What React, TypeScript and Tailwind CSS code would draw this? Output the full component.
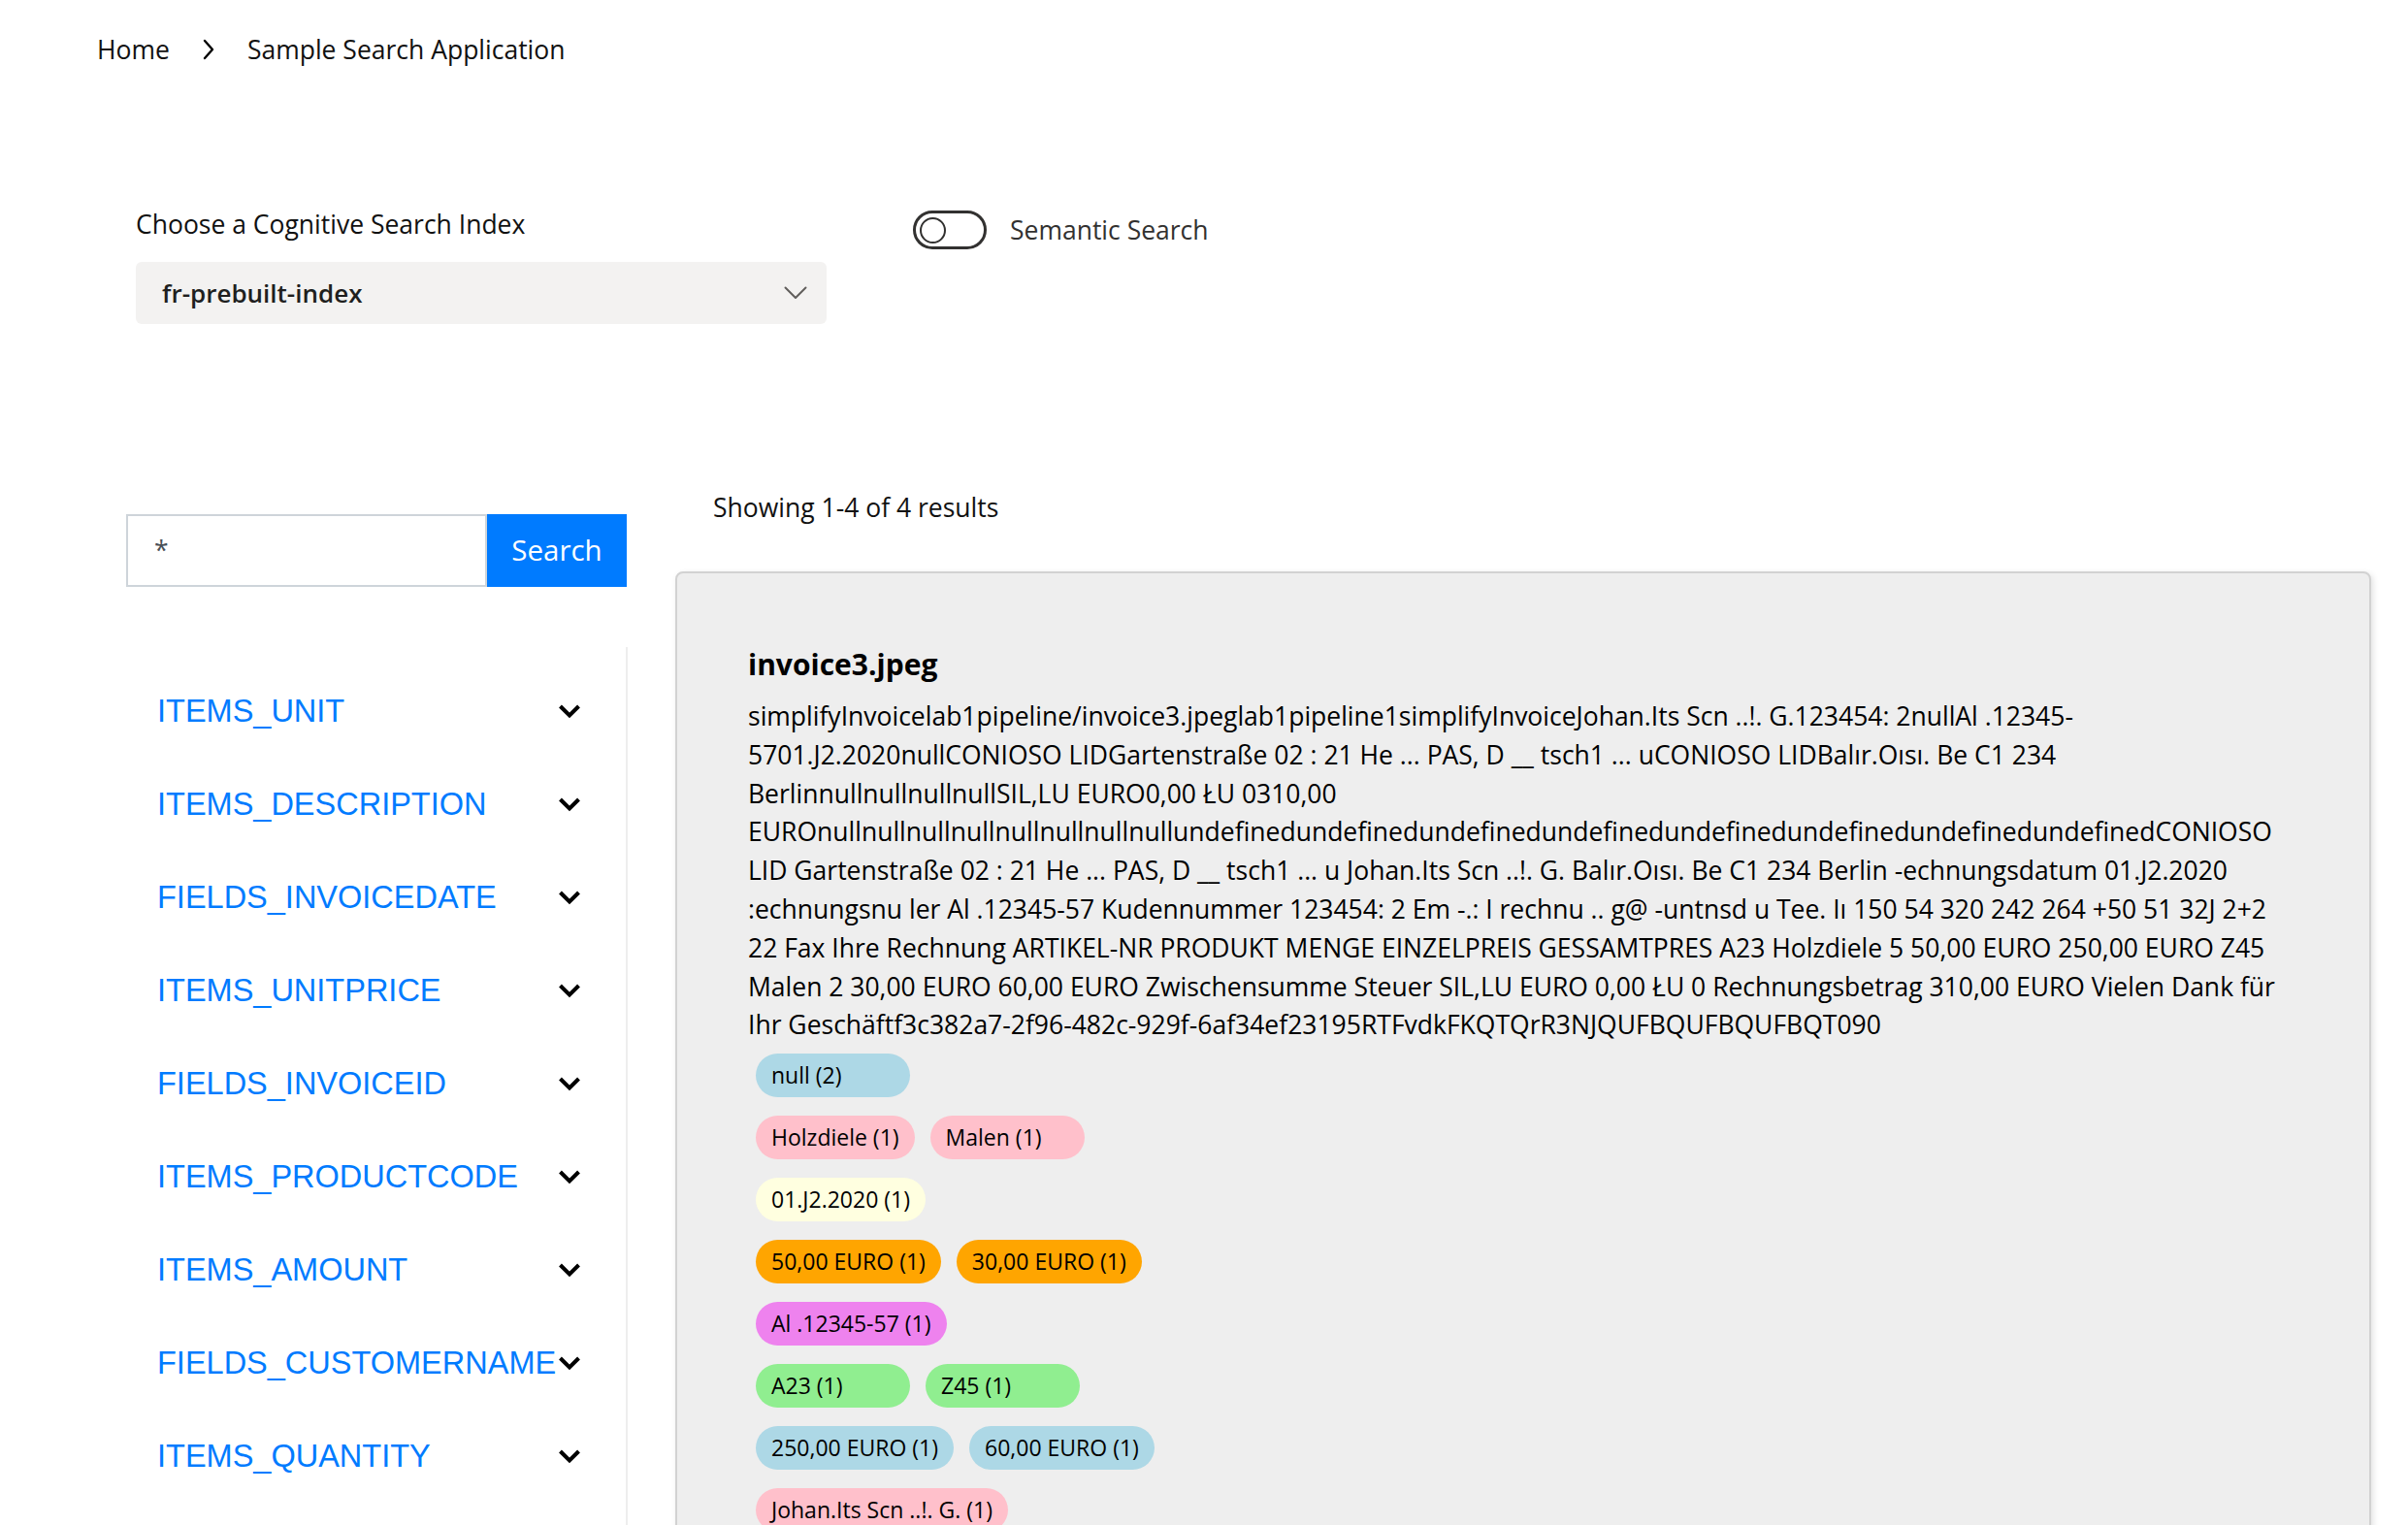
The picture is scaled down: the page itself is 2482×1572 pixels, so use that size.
import React from 'react';

const facets = [
  'ITEMS_UNIT',
  'ITEMS_DESCRIPTION',
  'FIELDS_INVOICEDATE',
  'ITEMS_UNITPRICE',
  'FIELDS_INVOICEID',
  'ITEMS_PRODUCTCODE',
  'ITEMS_AMOUNT',
  'FIELDS_CUSTOMERNAME',
  'ITEMS_QUANTITY',
];

const content =
  'simplifyInvoicelab1pipeline/invoice3.jpeglab1pipeline1simplifyInvoiceJohan.Its Scn ..!. G.123454: 2nullAl .12345-5701.J2.2020nullCONIOSO LIDGartenstraße 02 : 21 He ... PAS, D __ tsch1 ... uCONIOSO LIDBalır.Oısı. Be C1 234 BerlinnullnullnullnullSIL,LU EURO0,00 ŁU 0310,00 EUROnullnullnullnullnullnullnullnullundefinedundefinedundefinedundefinedundefinedundefinedundefinedundefinedCONIOSO LID Gartenstraße 02 : 21 He ... PAS, D __ tsch1 ... u Johan.Its Scn ..!. G. Balır.Oısı. Be C1 234 Berlin -echnungsdatum 01.J2.2020 :echnungsnu ler Al .12345-57 Kudennummer 123454: 2 Em -.: I rechnu .. g@ -untnsd u Tee. Iı 150 54 320 242 264 +50 51 32J 2+2 22 Fax Ihre Rechnung ARTIKEL-NR PRODUKT MENGE EINZELPREIS GESSAMTPRES A23 Holzdiele 5 50,00 EURO 250,00 EURO Z45 Malen 2 30,00 EURO 60,00 EURO Zwischensumme Steuer SIL,LU EURO 0,00 ŁU 0 Rechnungsbetrag 310,00 EURO Vielen Dank für Ihr Geschäftf3c382a7-2f96-482c-929f-6af34ef23195RTFvdkFKQTQrR3NJQUFBQUFBQUFBQT090';

// one row per entity type
const tagRows: { color: string; items: string[] }[] = [
  { color: 'bg-[#add8e6]', items: ['null (2)'] },
  { color: 'bg-[#ffc0cb]', items: ['Holzdiele (1)', 'Malen (1)'] },
  { color: 'bg-[#ffffe0]', items: ['01.J2.2020 (1)'] },
  { color: 'bg-[#ffa500]', items: ['50,00 EURO (1)', '30,00 EURO (1)'] },
  { color: 'bg-[#ee82ee]', items: ['Al .12345-57 (1)'] },
  { color: 'bg-[#90ee90]', items: ['A23 (1)', 'Z45 (1)'] },
  { color: 'bg-[#add8e6]', items: ['250,00 EURO (1)', '60,00 EURO (1)'] },
  { color: 'bg-[#ffc0cb]', items: ['Johan.Its Scn ..!. G. (1)'] },
  { color: 'bg-[#ffffe0]', items: ['CONIOSO LID (1)'] },
];

const ChevronRight = () => (
  <svg width="16" height="24" viewBox="0 0 16 24" fill="none">
    <polyline points="4,3 12,12 4,21" stroke="#000" strokeWidth="2.4" strokeLinecap="round" strokeLinejoin="round" />
  </svg>
);

const ChevronThin = () => (
  <svg width="24" height="14" viewBox="0 0 24 14" fill="none">
    <polyline points="1.5,1.5 12,12 22.5,1.5" stroke="#605e5c" strokeWidth="2" strokeLinecap="round" strokeLinejoin="round" />
  </svg>
);

const ChevronBold = () => (
  <svg width="24" height="16" viewBox="0 0 24 16" fill="none">
    <polyline points="2.5,3 12,12.5 21.5,3" stroke="#000" strokeWidth="4" />
  </svg>
);

export default function App() {
  return (
    <div className="h-screen overflow-hidden bg-white font-['Open_Sans',sans-serif] text-[#111]">
      {/* Breadcrumb */}
      <nav className="flex items-center gap-[32px] pl-[100px] pt-[33px] text-[26.5px] leading-[36px]">
        <span>Home</span>
        <ChevronRight />
        <span>Sample Search Application</span>
      </nav>

      {/* Index picker + semantic toggle */}
      <div className="mt-[144px] flex items-start pl-[140px]">
        <div className="w-[712px]">
          <div className="text-[26.5px] leading-[36px]">Choose a Cognitive Search Index</div>
          <div className="mt-[21px] flex h-[64px] items-center justify-between rounded-[6px] bg-[#f3f2f1] pl-[27px] pr-[20px]">
            <span className="text-[26px] font-semibold text-[#201f1e]">fr-prebuilt-index</span>
            <ChevronThin />
          </div>
        </div>
        <div className="ml-[89px] mt-[4px] flex items-center gap-[24px]">
          <div className="flex h-[40px] w-[76px] items-center rounded-full border-[3px] border-[#323130] pl-[4px]">
            <div className="h-[27px] w-[27px] rounded-full border-[2.5px] border-[#323130]" />
          </div>
          <span className="text-[26.5px] leading-[36px] text-[#323130]">Semantic Search</span>
        </div>
      </div>

      {/* Main */}
      <div className="mt-[171px] flex items-start pl-[130px] pr-[38px]">
        {/* Left: search + facets */}
        <div className="w-[517px] shrink-0 pt-[25px]">
          <div className="flex h-[75px]">
            <div className="flex w-[372px] items-center border-2 border-[#ced4da] pl-[27px] text-[26.5px] text-[#495057]">
              *
            </div>
            <button className="w-[144px] bg-[#007bff] text-[29.5px] text-white">Search</button>
          </div>

          <div className="mt-[62px] border-r-2 border-[#eeeeee] pb-[80px] pt-[18px]">
            {facets.map((f) => (
              <div key={f} className="flex h-[96px] items-center justify-between pl-[32px] pr-[46px]">
                <span className="font-['Liberation_Sans',Arial,sans-serif] text-[32.5px] leading-none text-[#007bff]">
                  {f}
                </span>
                <ChevronBold />
              </div>
            ))}
          </div>
        </div>

        {/* Right: results */}
        <div className="ml-[49px] min-w-0 flex-1">
          <div className="pl-[39px] text-[26.5px] leading-[36px]">Showing 1-4 of 4 results</div>

          <div className="mt-[48px] rounded-[8px] border-2 border-[#d2d2d2] bg-[#eeeeee] px-[73px] pb-[60px] pt-[74px] shadow-[2px_2px_6px_rgba(0,0,0,0.12)]">
            <h3 className="mb-[14px] text-[30px] font-bold leading-[40px] text-black">invoice3.jpeg</h3>
            <p className="text-[26.5px] leading-[39.8px] text-black">{content}</p>

            <div className="ml-[8px] mt-[9px] flex flex-col gap-[19px]">
              {tagRows.map((row, i) => (
                <div key={i} className="flex gap-[16px]">
                  {row.items.map((t) => (
                    <span
                      key={t}
                      className={`h-[45px] min-w-[159px] rounded-full px-[16px] text-left text-[23px] leading-[45px] text-black ${row.color}`}
                    >
                      {t}
                    </span>
                  ))}
                </div>
              ))}
            </div>
          </div>
        </div>
      </div>
    </div>
  );
}
